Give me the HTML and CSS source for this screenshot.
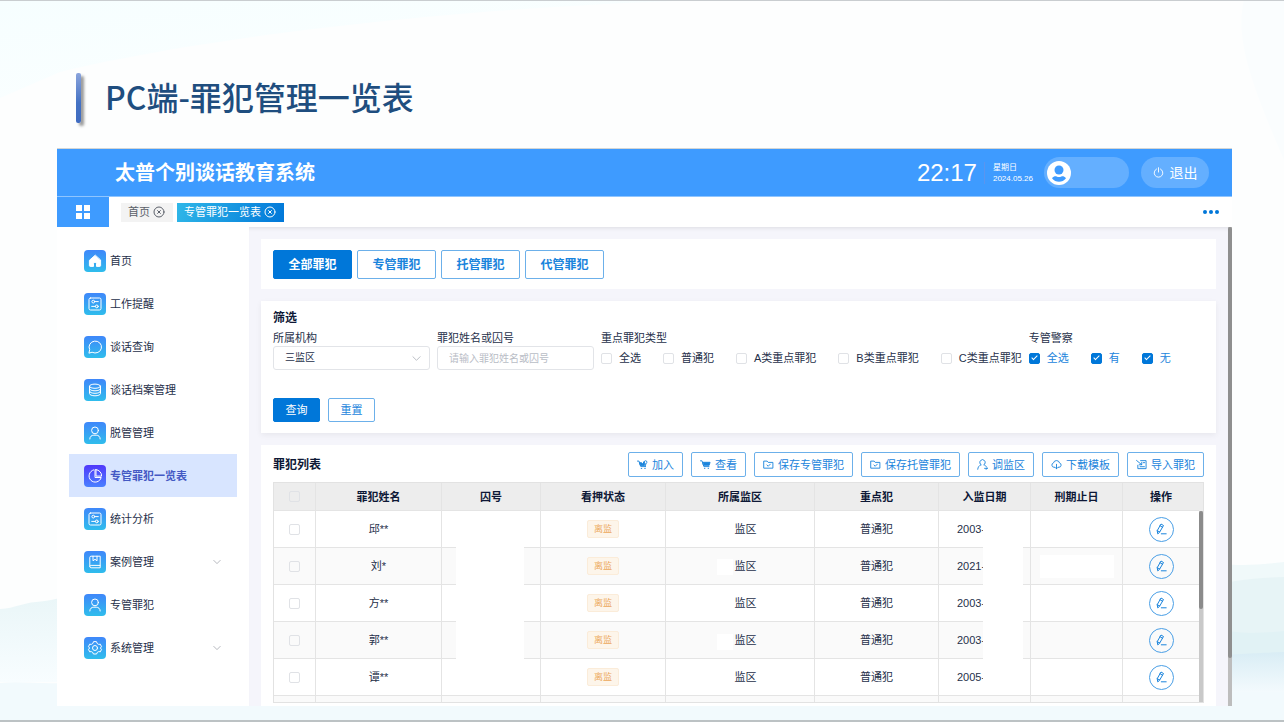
FILE: index.html
```html
<!DOCTYPE html>
<html lang="zh-CN">
<head>
    <meta charset="UTF-8">
    <meta name="viewport" content="width=device-width, initial-scale=1.0">
    <title>PC端-罪犯管理一览表</title>
    <link rel="stylesheet" href="styles.css">
</head>
<body>
    <!-- shared icons -->
    <svg class="sprite" aria-hidden="true">
        <symbol id="i-home" viewBox="0 0 22 22"><path d="M11 5.400 5.400 10.300v5.300c0 .5.3.8.8.8h3.300v-2.700a1.500 1.500 0 0 1 3 0v2.700h3.300c.5 0 .8-.3.8-.8v-5.300z" fill="#fff"/></symbol>
        <symbol id="i-board" viewBox="0 0 22 22"><rect x="5" y="5" width="12" height="12" rx="1.500"/><circle cx="9.300" cy="8.600" r="1.400"/><path d="M10.700 8.600H14.300M7.700 13.400h3.700"/><circle cx="12.800" cy="13.400" r="1.400"/></symbol>
        <symbol id="i-chat" viewBox="0 0 22 22"><path d="M5 16.800 5.700 13.700A6.200 6 0 1 1 8.400 16.400z"/></symbol>
        <symbol id="i-data" viewBox="0 0 22 22"><ellipse cx="11" cy="7.200" rx="5.500" ry="2.100"/><path d="M5.500 7.200v7.400c0 1.200 2.400 2.200 5.500 2.200s5.500-1 5.500-2.200V7.200M5.500 9.700c0 1.200 2.400 2.100 5.500 2.100s5.500-.9 5.500-2.100M5.500 12.200c0 1.200 2.400 2.100 5.500 2.100s5.500-.9 5.500-2.100"/></symbol>
        <symbol id="i-user" viewBox="0 0 22 22"><circle cx="11" cy="8.400" r="3.400"/><path d="M5.800 17c0-2.500 1.800-3.800 4-3.800h2.400c2.200 0 4 1.300 4 3.800"/></symbol>
        <symbol id="i-pie" viewBox="0 0 22 22"><path d="M9.600 4.900a6.200 6.200 0 1 0 7.600 7.600H11V4.900"/><path d="M12 4.600v6.500h5.600A6.200 6.200 0 0 0 12 4.600z"/></symbol>
        <symbol id="i-book" viewBox="0 0 22 22"><path d="M16.200 14.400V5.200H7.100c-.8 0-1.300.5-1.300 1.200v9c0 .9.6 1.400 1.300 1.400h9.100v-2.400H7.100c-.8 0-1.300.4-1.300 1.100"/><path d="M9 5.200v4.600l2-1.500 2 1.500V5.200"/></symbol>
        <symbol id="i-gear" viewBox="0 0 22 22"><path d="m9.400 5-.6 1.500-1.500.9-1.700-.2-1.100 2.600 1.200 1.200-1.200 1.300 1.100 2.500 1.700-.2 1.500.9.600 1.500h3.200l.6-1.500 1.500-.9 1.700.2 1.100-2.500-1.200-1.300 1.200-1.200-1.100-2.600-1.700.2-1.500-.9L12.600 5z"/><circle cx="11" cy="11" r="2.500"/></symbol>
        <symbol id="i-down" viewBox="0 0 10 10"><path d="m1 3 4 4 4-4"/></symbol>
        <symbol id="i-close" viewBox="0 0 12 12"><circle cx="6" cy="6" r="5"/><path d="m4.600 4.600 2.800 2.800M7.400 4.600 4.600 7.400"/></symbol>
        <symbol id="i-folder" viewBox="0 0 12 12"><path d="M1.200 2.300h3.300l1.200 1.400h5.100v6.300H1.200z"/><path d="m4.300 6.600 1.400 1.300 2.300-2.300"/></symbol>
        <symbol id="i-edit" viewBox="0 0 14 14"><path d="M3.700 11.500 3.200 8.700 7 2l2.500 1.500L5.700 10z"/><path d="M3.200 8.700 5.700 10M6 3.700l2.500 1.500M7.300 11.800h4.900"/></symbol>
    </svg>

    <svg class="hills" viewBox="0 0 1284 722" preserveAspectRatio="none" aria-hidden="true">
        <defs>
            <linearGradient id="mist" x1="0" y1="0" x2="0" y2="1">
                <stop offset="0" stop-color="#eaf6f8"/>
                <stop offset="1" stop-color="#f8fdff"/>
            </linearGradient>
            <linearGradient id="lake" x1="0" y1="0" x2="0" y2="1">
                <stop offset="0" stop-color="#d9edf5"/>
                <stop offset="1" stop-color="#f3fafd"/>
            </linearGradient>
            <linearGradient id="sky" x1="0" y1="0" x2="1" y2="1">
                <stop offset="0" stop-color="#f6feff"/>
                <stop offset="1" stop-color="#fcffff"/>
            </linearGradient>
        </defs>
        <path d="M0 0H700C400 10 170 45 60 72L0 98z" fill="url(#sky)"/>
        <path d="M1284 0h-40c-10 40 10 90 40 160z" fill="#fafdfe"/>
        <path d="M0 609c16-1 22-6 36-7s18-3 24-4v84H0z" fill="url(#mist)"/>
        <path d="M0 683c20-2 40 1 60 0h1224v39H0z" fill="#f2fafd"/>
        <path d="M1200 562c34 4 52 4 84 0v60h-84z" fill="#f0f9fa"/>
        <path d="M1200 590c28-10 54-12 84-13v70h-84z" fill="#e7f4f6"/>
        <path d="M1200 626c36 8 56 8 84 5v30h-84z" fill="#e1f2f5"/>
        <path d="M1200 656c40-2 60-3 84-4v40h-84z" fill="url(#lake)"/>
    </svg>

    <div class="slide">
        <h1 class="slide-title">PC端-罪犯管理一览表</h1>

        <div class="app">
            <header class="topbar">
                <h2 class="brand">太普个别谈话教育系统</h2>
                <time class="clock">22:17</time>
                <div class="date"><span>星期日</span><span>2024.05.26</span></div>
                <button type="button" class="user-pill" aria-label="用户">
                    <svg viewBox="0 0 24 24"><circle cx="12" cy="12" r="12" fill="#fff"/><circle cx="12" cy="9" r="4.500" fill="#3e9bff"/><path d="M5 17.200c1.600-1.800 3.200-2.300 4.600-1.700 1.700.7 3.100.7 4.800 0 1.400-.6 3 -.1 4.600 1.700-3.400 4.700-10.600 4.700-14 0z" fill="#3e9bff"/></svg>
                </button>
                <button type="button" class="logout">
                    <svg viewBox="0 0 12 12"><path d="M3.800 2.200a4.700 4.700 0 1 0 4.400 0M6 .8v4.700"/></svg>
                    退出
                </button>
            </header>

            <div class="tabs">
                <button type="button" class="menu-toggle" aria-label="菜单">
                    <svg viewBox="0 0 14 14"><path d="M0 0h6v6H0zM8 0h6v6H8zM0 8h6v6H0zM8 8h6v6H8z" fill="#fff"/></svg>
                </button>
                <a href="#" class="tab">首页<svg><use href="#i-close"/></svg></a>
                <a href="#" class="tab tab-active">专管罪犯一览表<svg><use href="#i-close"/></svg></a>
                <button type="button" class="more" aria-label="更多">
                    <svg viewBox="0 0 16 4"><circle cx="2" cy="2" r="2"/><circle cx="8" cy="2" r="2"/><circle cx="14" cy="2" r="2"/></svg>
                </button>
            </div>

            <div class="workspace">
                <nav class="sidebar">
                    <a href="#" class="nav-item"><svg class="nav-icon"><use href="#i-home"/></svg>首页</a>
                    <a href="#" class="nav-item"><svg class="nav-icon"><use href="#i-board"/></svg>工作提醒</a>
                    <a href="#" class="nav-item"><svg class="nav-icon"><use href="#i-chat"/></svg>谈话查询</a>
                    <a href="#" class="nav-item"><svg class="nav-icon"><use href="#i-data"/></svg>谈话档案管理</a>
                    <a href="#" class="nav-item"><svg class="nav-icon"><use href="#i-user"/></svg>脱管管理</a>
                    <a href="#" class="nav-item nav-active"><svg class="nav-icon"><use href="#i-pie"/></svg>专管罪犯一览表</a>
                    <a href="#" class="nav-item"><svg class="nav-icon"><use href="#i-board"/></svg>统计分析</a>
                    <a href="#" class="nav-item"><svg class="nav-icon"><use href="#i-book"/></svg>案例管理<svg class="nav-arrow"><use href="#i-down"/></svg></a>
                    <a href="#" class="nav-item"><svg class="nav-icon"><use href="#i-user"/></svg>专管罪犯</a>
                    <a href="#" class="nav-item"><svg class="nav-icon"><use href="#i-gear"/></svg>系统管理<svg class="nav-arrow"><use href="#i-down"/></svg></a>
                </nav>

                <main class="content">
                    <section class="card kinds">
                        <button type="button" class="btn btn-kind btn-primary">全部罪犯</button>
                        <button type="button" class="btn btn-kind">专管罪犯</button>
                        <button type="button" class="btn btn-kind">托管罪犯</button>
                        <button type="button" class="btn btn-kind">代管罪犯</button>
                    </section>

                    <form class="card filter">
                        <h3 class="card-title">筛选</h3>
                        <div class="fields">
                            <div class="field">
                                <label for="org">所属机构</label>
                                <div class="select-box">
                                    <select id="org" class="control"><option>三监区</option></select>
                                    <svg class="select-arrow"><use href="#i-down"/></svg>
                                </div>
                            </div>
                            <div class="field">
                                <label for="keyword">罪犯姓名或囚号</label>
                                <input type="text" id="keyword" class="control" placeholder="请输入罪犯姓名或囚号">
                            </div>
                            <fieldset class="field">
                                <legend>重点罪犯类型</legend>
                                <div class="checks">
                                    <label class="check"><input type="checkbox">全选</label>
                                    <label class="check"><input type="checkbox">普通犯</label>
                                    <label class="check"><input type="checkbox">A类重点罪犯</label>
                                    <label class="check"><input type="checkbox">B类重点罪犯</label>
                                    <label class="check"><input type="checkbox">C类重点罪犯</label>
                                </div>
                            </fieldset>
                            <fieldset class="field">
                                <legend>专管警察</legend>
                                <div class="checks">
                                    <label class="check check-on"><input type="checkbox" checked>全选</label>
                                    <label class="check check-on"><input type="checkbox" checked>有</label>
                                    <label class="check check-on"><input type="checkbox" checked>无</label>
                                </div>
                            </fieldset>
                        </div>
                        <div class="actions">
                            <button type="submit" class="btn btn-small btn-primary">查询</button>
                            <button type="reset" class="btn btn-small">重置</button>
                        </div>
                    </form>

                    <section class="card list">
                        <div class="list-head">
                            <h3 class="card-title">罪犯列表</h3>
                            <div class="tools">
                                <button type="button" class="btn btn-tool"><svg viewBox="0 0 12 12"><path d="M.5 2.300h1.700l1.900 6h5.300M9.600 5.400 8.900 8"/><path d="M3 4h2l1 1.600L7.600 3 8.200 7H4z" fill="currentColor"/><path d="M7.800 3.400a1.500 1.500 0 1 1 3 0c0 .9-1.500 2.300-1.500 2.300S7.800 4.300 7.800 3.400z"/><path d="M4.600 10.300h.6M8.400 10.300H9"/></svg>加入</button>
                                <button type="button" class="btn btn-tool"><svg viewBox="0 0 12 12"><path d="M.5 2h1.700l2 6.300h5.600"/><path d="M3.200 3.600h7.800L10 6.900H4.200z" fill="currentColor"/><path d="M4.800 10.200h.6M8.800 10.200h.6"/></svg>查看</button>
                                <button type="button" class="btn btn-tool"><svg><use href="#i-folder"/></svg>保存专管罪犯</button>
                                <button type="button" class="btn btn-tool"><svg><use href="#i-folder"/></svg>保存托管罪犯</button>
                                <button type="button" class="btn btn-tool"><svg viewBox="0 0 12 12"><path d="M4.300 6.300a3 3 0 1 1 3.400 0M4.300 6.300C2.200 7.200 1 8.800.8 11.200M7.700 6.300c1.500.7 2.300 1.500 2.800 2.600M8.300 10.200h3M9.800 11.300l1.500-1.100"/></svg>调监区</button>
                                <button type="button" class="btn btn-tool"><svg viewBox="0 0 12 12"><path d="M4 9H3.200A2.400 2.400 0 0 1 2.700 4.300a3.400 3.400 0 0 1 6.600 0A2.400 2.400 0 0 1 8.800 9H8M6 5.800v4.800M4.600 9.300 6 10.700l1.400-1.400"/></svg>下载模板</button>
                                <button type="button" class="btn btn-tool"><svg viewBox="0 0 12 12"><path d="M5 1.800h6v8.700H2V6.800M.6 1.600l5.600 4.600M6.300 3.600v2.700H3.500M8 4h1.500M4.500 8.400h4.700"/></svg>导入罪犯</button>
                            </div>
                        </div>

                        <div class="table-box">
                            <div class="table-scroll">
                                <table class="table">
                                    <colgroup>
                                        <col class="c-check"><col class="c-name"><col class="c-no"><col class="c-state"><col class="c-area"><col class="c-type"><col class="c-date"><col class="c-date"><col class="c-op">
                                    </colgroup>
                                    <thead>
                                        <tr>
                                            <th><input type="checkbox" aria-label="全选"></th>
                                            <th>罪犯姓名</th>
                                            <th>囚号</th>
                                            <th>看押状态</th>
                                            <th>所属监区</th>
                                            <th>重点犯</th>
                                            <th>入监日期</th>
                                            <th>刑期止日</th>
                                            <th>操作</th>
                                        </tr>
                                    </thead>
                                    <tbody>
                                        <tr>
                                            <td><input type="checkbox" aria-label="选择"></td><td>邱**</td><td></td><td><span class="tag">离监</span></td><td class="area">监区</td><td>普通犯</td><td class="in-date">2003-</td><td></td>
                                            <td><button type="button" class="edit" aria-label="编辑"><svg><use href="#i-edit"/></svg></button></td>
                                        </tr>
                                        <tr>
                                            <td><input type="checkbox" aria-label="选择"></td><td>刘*</td><td></td><td><span class="tag">离监</span></td><td class="area">监区</td><td>普通犯</td><td class="in-date">2021-</td><td><span class="blank"></span></td>
                                            <td><button type="button" class="edit" aria-label="编辑"><svg><use href="#i-edit"/></svg></button></td>
                                        </tr>
                                        <tr>
                                            <td><input type="checkbox" aria-label="选择"></td><td>方**</td><td></td><td><span class="tag">离监</span></td><td class="area">监区</td><td>普通犯</td><td class="in-date">2003-</td><td></td>
                                            <td><button type="button" class="edit" aria-label="编辑"><svg><use href="#i-edit"/></svg></button></td>
                                        </tr>
                                        <tr>
                                            <td><input type="checkbox" aria-label="选择"></td><td>郭**</td><td></td><td><span class="tag">离监</span></td><td class="area">监区</td><td>普通犯</td><td class="in-date">2003-</td><td></td>
                                            <td><button type="button" class="edit" aria-label="编辑"><svg><use href="#i-edit"/></svg></button></td>
                                        </tr>
                                        <tr>
                                            <td><input type="checkbox" aria-label="选择"></td><td>谭**</td><td></td><td><span class="tag">离监</span></td><td class="area">监区</td><td>普通犯</td><td class="in-date">2005-</td><td></td>
                                            <td><button type="button" class="edit" aria-label="编辑"><svg><use href="#i-edit"/></svg></button></td>
                                        </tr>
                                        <tr>
                                            <td></td><td></td><td></td><td></td><td></td><td></td><td></td><td></td><td></td>
                                        </tr>
                                    </tbody>
                                </table>
                                <!-- covers for private data -->
                                <div class="cover cover-no"></div>
                                <div class="cover cover-area"></div>
                                <div class="cover cover-area cover-area-2"></div>
                                <div class="cover cover-date"></div>
                            </div>
                            <div class="table-bar"><div class="table-thumb"></div></div>
                        </div>
                    </section>
                </main>
                <div class="page-bar"><div class="page-thumb"></div></div>
            </div>
        </div>
    </div>
</body>
</html>
```

FILE: styles.css
```css
* {
    box-sizing: border-box;
}

body {
    margin: 0;
    font-family: "Liberation Sans", "Noto Sans CJK SC", sans-serif;
    font-size: 11px;
    line-height: 16px;
    color: #26304a;
    background: #fdfefe;
}

h1, h2, h3 {
    margin: 0;
}

a {
    color: inherit;
    text-decoration: none;
}

button, input, select {
    font: inherit;
    color: inherit;
}

button {
    border: none;
    padding: 0;
    background: none;
    cursor: pointer;
}

svg {
    display: block;
    flex: none;
    fill: none;
    stroke-linecap: round;
    stroke-linejoin: round;
}

.sprite {
    position: absolute;
    width: 0;
    height: 0;
}

.hills {
    position: absolute;
    width: 100%;
    height: 100%;
    z-index: -1;
}

.slide {
    display: flex;
    flex-direction: column;
    height: 100vh;
    padding: 72px 52px 14px 57px;
    border-top: 1px solid #c9cdd0;
    border-bottom: 2px solid #bcc2c4;
}

.slide-title {
    display: flex;
    align-items: flex-start;
    height: 50px;
    margin: 0 0 25px 19px;
    font-family: "Noto Sans CJK SC", sans-serif;
    font-size: 32px;
    font-weight: 500;
    line-height: 46px;
    color: #1f4e7f;
}

.slide-title::before {
    content: "";
    width: 5px;
    height: 50px;
    margin-right: 24px;
    border-radius: 2px;
    background: linear-gradient(#8ba4dc, #4472c4 60%, #3f6bc0);
    box-shadow: 3px 3px 3px rgba(0, 0, 0, 0.4);
}

.app {
    display: flex;
    flex-direction: column;
    flex: 1;
    min-height: 0;
    border-top: 1px solid #d3d6d6;
    background: #fff;
}

/* top bar */
.topbar {
    display: flex;
    align-items: center;
    height: 48px;
    padding: 0 23px 0 58px;
    border-bottom: 1px solid #8fc5ff;
    background: #3e9bff;
    color: #fff;
}

.brand {
    margin-right: auto;
    font-size: 20px;
    line-height: 28px;
}

.clock {
    padding-right: 7px;
    font-size: 24px;
    line-height: 28px;
}

.date {
    display: flex;
    flex-direction: column;
    padding-left: 8px;
    margin-right: 11px;
    border-left: 1px solid #5b95ee;
    font-size: 8px;
    line-height: 11px;
}

.user-pill {
    width: 85px;
    height: 31px;
    padding-left: 3px;
    margin-right: 12px;
    border-radius: 16px;
    background: #64afff;
}

.user-pill svg {
    width: 24px;
    height: 24px;
}

.logout {
    display: flex;
    align-items: center;
    justify-content: center;
    gap: 6px;
    width: 68px;
    height: 31px;
    border-radius: 16px;
    background: #64afff;
    font-size: 14px;
}

.logout svg {
    width: 11px;
    height: 11px;
    stroke: #fff;
}

/* tabs */
.tabs {
    display: flex;
    align-items: center;
    gap: 4px;
    height: 30px;
    padding-right: 13px;
}

.menu-toggle {
    display: flex;
    align-items: center;
    justify-content: center;
    width: 52px;
    height: 30px;
    margin-right: 8px;
    background: #3e9bff;
}

.menu-toggle svg {
    width: 14px;
    height: 14px;
}

.tab {
    display: flex;
    align-items: center;
    gap: 3px;
    height: 19px;
    padding: 0 8px 0 7px;
    background: #f3f3f3;
    color: #5a5f69;
}

.tab svg {
    width: 12px;
    height: 12px;
    stroke: currentColor;
}

.tab-active {
    background: linear-gradient(110deg, #2fb7e8, #0077d9);
    color: #fff;
}

.more {
    margin-left: auto;
}

.more svg {
    width: 16px;
    height: 4px;
    fill: #0077d9;
}

.workspace {
    display: flex;
    flex: 1;
    min-height: 0;
}

/* sidebar */
.sidebar {
    width: 192px;
    padding: 12px;
}

.nav-item {
    display: flex;
    align-items: center;
    gap: 4px;
    height: 43px;
    padding: 0 16px 0 15px;
}

.nav-icon {
    width: 22px;
    height: 22px;
    border-radius: 4px;
    background: linear-gradient(#3f87fa, #2fbdec);
    stroke: #fff;
}

.nav-arrow {
    width: 8px;
    height: 8px;
    margin-left: auto;
    stroke: #a3a7af;
}

.nav-active {
    background: #d8e5ff;
    color: #4459c4;
    font-weight: bold;
}

.nav-active .nav-icon {
    background: linear-gradient(#5038fb, #4a80ff);
}

/* content */
.content {
    display: flex;
    flex-direction: column;
    flex: 1;
    gap: 12px;
    min-width: 0;
    padding: 12px 12px 0;
    background: #f5f5fb;
    box-shadow: inset 0 4px 4px -3px rgba(0, 0, 0, 0.1);
}

.card {
    padding: 0 12px;
    background: #fff;
}

.card-title {
    font-size: 12px;
    line-height: 18px;
    color: #0e1836;
}

.btn {
    display: flex;
    align-items: center;
    justify-content: center;
    border: 1px solid #6cb0ea;
    border-radius: 2px;
    background: #fff;
    color: #1a84dc;
    white-space: nowrap;
}

.btn-primary {
    border-color: #0077d9;
    background: #0077d9;
    color: #fff;
}

.kinds {
    display: flex;
    gap: 5px;
    padding-top: 11px;
    padding-bottom: 10px;
}

.btn-kind {
    width: 79px;
    height: 29px;
    font-size: 12px;
    font-weight: bold;
}

.filter {
    padding-top: 8px;
    padding-bottom: 11px;
    box-shadow: 0 2px 6px rgba(0, 0, 0, 0.06);
}

.fields {
    display: flex;
    gap: 7px;
}

.field {
    display: flex;
    flex-direction: column;
    min-width: 0;
    margin: 0;
    padding: 3px 0 0;
    border: none;
}

.field legend {
    float: left;
    padding: 0;
}

.select-box {
    position: relative;
}

.control {
    display: block;
    width: 157px;
    height: 24px;
    padding: 0 11px;
    border: 1px solid #e2e4e8;
    border-radius: 3px;
    background: #fff;
    font-size: 10px;
    appearance: none;
}

.control::placeholder {
    color: #b9bdc6;
}

.select-arrow {
    position: absolute;
    top: 8px;
    right: 9px;
    width: 9px;
    height: 9px;
    stroke: #b4b8c0;
    pointer-events: none;
}

.checks {
    display: flex;
    align-items: center;
    gap: 22px;
    height: 24px;
}

.check {
    display: flex;
    align-items: center;
    gap: 7px;
    white-space: nowrap;
}

.check-on {
    color: #1a84dc;
}

input[type="checkbox"] {
    display: grid;
    place-items: center;
    width: 11px;
    height: 11px;
    margin: 0;
    border: 1px solid #e0e2e6;
    border-radius: 2px;
    appearance: none;
}

input[type="checkbox"]:checked {
    border-color: #0077d9;
    background: #0077d9;
}

input[type="checkbox"]:checked::after {
    content: "";
    width: 3px;
    height: 6px;
    margin-bottom: 2px;
    border: solid #fff;
    border-width: 0 1px 1px 0;
    box-sizing: border-box;
    transform: rotate(45deg);
}

.actions {
    display: flex;
    gap: 8px;
    margin-top: 28px;
}

.btn-small {
    width: 47px;
    height: 24px;
}

/* list */
.list {
    display: flex;
    flex-direction: column;
    flex: 1;
    min-height: 0;
    padding-bottom: 3px;
}

.list-head {
    display: flex;
    align-items: center;
    justify-content: space-between;
    padding: 7px 0 5px;
}

.tools {
    display: flex;
    gap: 8px;
}

.btn-tool {
    gap: 4px;
    height: 25px;
    padding: 0 8px;
}

.btn-tool svg {
    width: 11px;
    height: 11px;
    stroke: currentColor;
}

.table-box {
    display: flex;
    flex: 1;
    min-height: 0;
    border: 1px solid #e2e2e2;
}

.table-scroll {
    position: relative;
    flex: 1;
    overflow: hidden;
}

.table {
    width: 100%;
    table-layout: fixed;
    border-collapse: separate;
    border-spacing: 0;
    text-align: center;
}

.table th, .table td {
    padding: 0;
    border-right: 1px solid #e4e4e4;
    border-bottom: 1px solid #e4e4e4;
}

.table th:last-child, .table td:last-child {
    border-right: none;
}

.table th {
    height: 28px;
    background: #ededed;
    color: #0e1836;
}

.table td {
    height: 37px;
}

.table tr:nth-child(even) td {
    background: #fafafa;
}

.table input[type="checkbox"] {
    margin: 0 auto;
}

.c-check { width: 42px; }
.c-name { width: 126px; }
.c-no { width: 99px; }
.c-state { width: 125px; }
.c-area { width: 149px; }
.c-type { width: 124px; }
.c-date { width: 92px; }
.c-op { width: 76px; }

.tag {
    display: inline-block;
    padding: 0 6px;
    border: 1px solid #fbecd9;
    border-radius: 2px;
    background: #fdf5ea;
    color: #eca85a;
    font-size: 9px;
}

.table .area {
    padding-left: 11px;
}

.table .in-date {
    padding-left: 18px;
    text-align: left;
}

.blank {
    display: block;
    height: 23px;
    margin: 0 8px 0 9px;
    background: #fff;
}

.edit {
    display: flex;
    align-items: center;
    justify-content: center;
    width: 25px;
    height: 25px;
    margin: 0 auto;
    border: 1px solid #4a9fe6;
    border-radius: 50%;
    color: #1a84dc;
}

.edit svg {
    width: 14px;
    height: 14px;
    stroke: currentColor;
}

.edit use {
    stroke-width: 1px;
}

.cover {
    position: absolute;
    background: #fff;
}

.cover-no {
    top: 62px;
    left: 182px;
    width: 68px;
    height: 130px;
}

.cover-area {
    top: 76px;
    left: 443px;
    width: 16px;
    height: 16px;
}

.cover-area-2 {
    top: 151px;
}

.cover-date {
    top: 34px;
    left: 709px;
    width: 40px;
    height: 168px;
}

.table-bar {
    width: 4px;
    padding-top: 28px;
    background: linear-gradient(#ededed 28px, #c9c9c9 28px);
}

.table-thumb {
    height: 98px;
    border-radius: 2px;
    background: #8b8b8b;
}

.page-bar {
    width: 4px;
    background: #bdbdbd;
}

.page-thumb {
    height: 90%;
    border-radius: 2px;
    background: #8f8f8f;
}
```
